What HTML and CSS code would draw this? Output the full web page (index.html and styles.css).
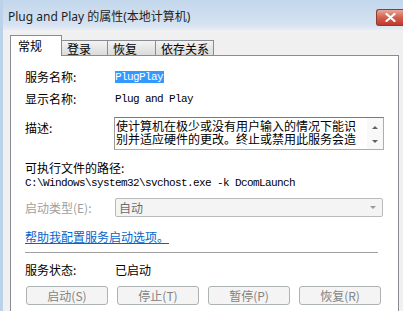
FILE: index.html
```html
<!DOCTYPE html>
<html lang="zh-CN">
<head>
    <meta charset="UTF-8">
    <title>Plug and Play 的属性(本地计算机)</title>
    <link rel="stylesheet" href="styles.css">
</head>
<body>
    <div class="window">
        <!-- Title bar -->
        <div class="titlebar">
            <span class="title">Plug and Play 的属性(本地计算机)</span>
            <span class="close">
                <svg width="11" height="9" viewBox="0 0 11 9">
                    <path d="M1.5 1 L9.5 8 M9.5 1 L1.5 8" stroke="#fff" stroke-width="2.2" stroke-linecap="round"/>
                </svg>
            </span>
        </div>

        <div class="client">
            <!-- Tabs -->
            <div class="tabs">
                <div class="tab active">常规</div>
                <div class="tab t-logon">登录</div>
                <div class="tab t-recover">恢复</div>
                <div class="tab t-deps">依存关系</div>
            </div>

            <!-- General page -->
            <div class="panel">
                <div class="row r-name">
                    <span class="label">服务名称:</span>
                    <span class="mono selected">PlugPlay</span>
                </div>
                <div class="row r-display">
                    <span class="label">显示名称:</span>
                    <span class="mono">Plug and Play</span>
                </div>
                <div class="row r-desc">
                    <span class="label desc-label">描述:</span>
                    <div class="textbox">
                        <div class="textbox-text">使计算机在极少或没有用户输入的情况下能识别并适应硬件的更改。终止或禁用此服务会造</div>
                        <div class="scrollbar">
                            <span class="arrow up"></span>
                            <span class="arrow down"></span>
                        </div>
                    </div>
                </div>
                <div class="row r-path-label">
                    <span>可执行文件的路径:</span>
                </div>
                <div class="row r-path">
                    <span class="mono">C:\Windows\system32\svchost.exe -k DcomLaunch</span>
                </div>
                <div class="row r-startup">
                    <span class="label disabled">启动类型(E):</span>
                    <div class="select">
                        <span>自动</span>
                        <span class="arrow down"></span>
                    </div>
                </div>
                <div class="row r-link">
                    <a href="#" class="help-link">帮助我配置服务启动选项。</a>
                </div>
                <div class="separator"></div>
                <div class="row r-status">
                    <span class="label">服务状态:</span>
                    <span>已启动</span>
                </div>
                <div class="buttons">
                    <button disabled>启动(S)</button>
                    <button disabled>停止(T)</button>
                    <button disabled>暂停(P)</button>
                    <button disabled>恢复(R)</button>
                </div>
            </div>
        </div>
    </div>
</body>
</html>
```

FILE: styles.css
```css
body {
    margin: 0;
    font-family: "Noto Sans CJK SC", sans-serif;
    font-size: 12px;
    color: #000;
}

.window {
    width: 403px;
    height: 311px;
    box-sizing: border-box;
    display: flex;
    flex-direction: column;
    background: #f0f0f0;
    border-left: 3px solid #bcd2ea;
    overflow: hidden;
}

/* Title bar */
.titlebar {
    flex: none;
    height: 30px;
    display: flex;
    align-items: flex-start;
    justify-content: space-between;
    padding-left: 5px;
    background: linear-gradient(to bottom, #c3d7ec, #d4e2f1 80%, #e6edf5);
}

.title {
    margin-top: 8px;
    line-height: 18px;
    font-family: "Noto Sans", "Noto Sans CJK SC", sans-serif;
    color: #1e1e1e;
}

.close {
    margin-top: 9px;
    width: 27px;
    height: 17px;
    box-sizing: border-box;
    display: flex;
    align-items: center;
    justify-content: center;
    border: 1px solid #8f3b31;
    border-right: none;
    border-radius: 3px 0 0 3px;
    background: linear-gradient(to bottom, #e8a898, #d2604f 50%, #c0392b);
}

/* Client area */
.client {
    flex: 1;
    display: flex;
    flex-direction: column;
    padding: 6px 4px 0 7px;
}

.tabs {
    flex: none;
    display: flex;
    align-items: flex-end;
    height: 20px;
    margin-bottom: -1px;
}

.tab {
    box-sizing: border-box;
    height: 16px;
    line-height: 15px;
    padding-left: 5px;
    margin-left: -1px;
    border: 1px solid #898c95;
    border-bottom: none;
    background: linear-gradient(to bottom, #f3f3f3, #e6e6e6 50%, #dadada);
}

.tab.active {
    position: relative;
    height: 21px;
    width: 52px;
    margin-left: 0;
    padding-left: 7px;
    line-height: 19px;
    background: #fff;
}

.t-logon { width: 47px; }
.t-recover { width: 49px; }
.t-deps { width: 59px; }

/* the page runs on below the bottom edge of the shot */
.panel {
    flex: none;
    height: 262px;
    background: #fff;
    border: 1px solid #898c95;
    padding: 14px 0 0 14px;
}

.row {
    display: flex;
    align-items: center;
    line-height: 14px;
    height: 14px;
}

.label {
    width: 90px;
    flex: none;
}

.disabled {
    color: #a0a0a0;
}

.mono {
    font-family: "Liberation Mono", monospace;
    font-size: 11px;
    letter-spacing: -0.6px;
}

.selected {
    background: #3399ff;
    color: #fff;
    line-height: 12px;
    padding-right: 1px;
}

.r-display { margin-top: 8px; }

.r-desc {
    margin-top: 11px;
    height: 33px;
    align-items: flex-start;
}

.desc-label {
    margin-top: 4px;
}

.textbox {
    margin-left: -1px;
    width: 270px;
    height: 33px;
    box-sizing: border-box;
    display: flex;
    border: 1px solid #abadb3;
    border-top-color: #7a7a7a;
    border-left-color: #9a9a9a;
}

.textbox-text {
    width: 250px;
    padding: 1px 0 0 1px;
    line-height: 13px;
}

.scrollbar {
    margin-left: auto;
    width: 16px;
    display: flex;
    flex-direction: column;
    align-items: center;
    justify-content: space-between;
    padding: 8px 0 6px;
    background: #f8f8f8;
}

.arrow {
    width: 0;
    height: 0;
    border-left: 3px solid transparent;
    border-right: 3px solid transparent;
}

.arrow.up { border-bottom: 3px solid #606060; }
.arrow.down { border-top: 3px solid #606060; }

.r-path-label { margin-top: 11px; }
.r-path { margin-top: 1px; }

.r-startup {
    margin-top: 8px;
    height: 19px;
}

.select {
    flex: 1;
    max-width: 268px;
    height: 19px;
    box-sizing: border-box;
    display: flex;
    align-items: center;
    justify-content: space-between;
    padding: 0 6px 0 3px;
    border: 1px solid #b8babd;
    border-radius: 2px;
    background: #f4f4f4;
    color: #6d6d6d;
}

.select .arrow.down {
    border-top-color: #9a9a9a;
}

.r-link { margin-top: 13px; }

.help-link {
    color: #0066cc;
}

.separator {
    margin-top: 8px;
    width: 353px;
    height: 1px;
    background: #a0a0a0;
}

.r-status { margin-top: 10px; }

.buttons {
    display: flex;
    gap: 9px;
    margin-top: 9px;
    padding-left: 1px;
}

.buttons button {
    width: 82px;
    height: 19px;
    padding: 0;
    font-family: "Noto Sans CJK SC", sans-serif;
    font-size: 12px;
    line-height: 16px;
    color: #838383;
    border: 1px solid #adb2b5;
    border-radius: 3px;
    background: #f4f4f4;
}
```
